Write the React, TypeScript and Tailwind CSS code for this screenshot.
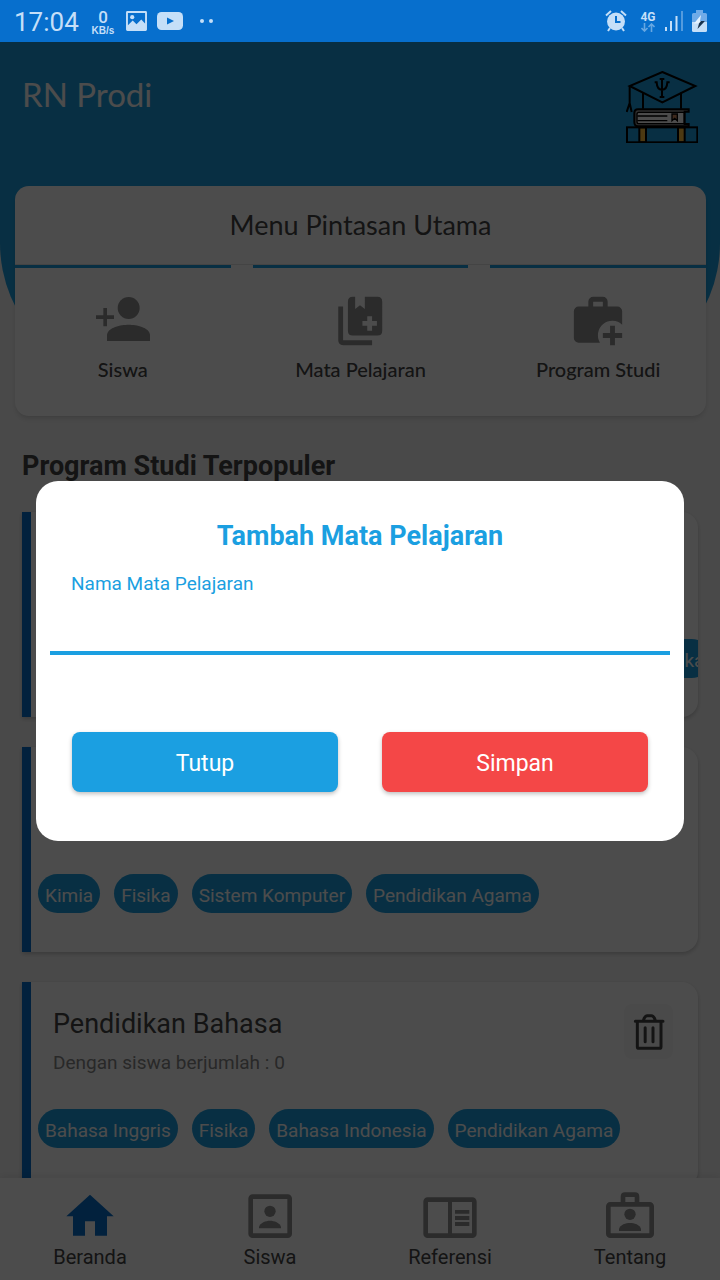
import React, { useState } from "react";

const roboto = "font-['Roboto',sans-serif]";
const lato = "font-['Lato',sans-serif]";

function StatusBar() {
  return (
    <div className="flex h-[42px] shrink-0 items-center justify-between bg-[#076fcd] pl-[14px] pr-[13px] text-[#c5dff8]">
      <div className="flex items-center">
        <span className="w-[76px] pt-[2px] text-[26px] leading-[40px]">17:04</span>
        <span className="flex w-[26px] flex-col items-center pt-[2px]">
          <span className="text-[17px] font-medium leading-[17px]">0</span>
          <span className="font-['Liberation_Sans',sans-serif] text-[10px] font-bold leading-[10px]">KB/s</span>
        </span>
        <svg className="ml-[10px] h-[20px] w-[21px]" viewBox="0 0 22 21" fill="currentColor">
          <path fillRule="evenodd" d="M1.500 0H20.500Q22 0 22 1.500V19.500Q22 21 20.500 21H1.500Q0 21 0 19.500V1.500Q0 0 1.500 0ZM2 2V15L7 10L11 14L16 9L20 13V2Z" />
          <circle cx="6.500" cy="6.500" r="2.200" />
        </svg>
        <svg className="ml-[10px] h-[18px] w-[26px]" viewBox="0 0 26 18">
          <rect width="26" height="18" rx="4.500" fill="currentColor" />
          <path d="M10 5.500V12.500L17 9Z" fill="#076fcd" />
        </svg>
        <svg className="ml-[17px] h-[4px] w-[14px]" viewBox="0 0 14 4" fill="currentColor">
          <circle cx="2" cy="2" r="2" />
          <circle cx="11" cy="2" r="2" />
        </svg>
      </div>
      <div className="flex items-center">
        <svg className="h-[22px] w-[22px]" viewBox="0 0 22 22" fill="none" stroke="currentColor" strokeWidth="2">
          <circle cx="11" cy="11.500" r="9" fill="currentColor" stroke="none" />
          <path d="M1 5.500L6 1M21 5.500L16 1M5 18L3 21M17 18L19 21" />
          <path d="M11 6V12H15.500" stroke="#076fcd" />
        </svg>
        <span className="ml-[12px] flex w-[18px] flex-col items-center">
          <span className="text-[12px] font-bold leading-[12px]">4G</span>
          <svg className="h-[9px] w-[14px] opacity-50" viewBox="0 0 14 9" fill="none" stroke="currentColor" strokeWidth="1.600">
            <path d="M3.500 0V8M.5 5L3.500 8L6.500 5M10.500 9V1M7.500 4L10.500 1L13.500 4" />
          </svg>
        </span>
        <svg className="ml-[8px] h-[20px] w-[18px]" viewBox="0 0 18 20" fill="currentColor">
          <rect x="0" y="16" width="2" height="4" />
          <rect x="5" y="10" width="2" height="10" />
          <rect x="10.500" y="5" width="2" height="15" />
          <rect x="16" y="0" width="2" height="20" opacity=".4" />
        </svg>
        <svg className="ml-[9px] h-[22px] w-[15px]" viewBox="0 0 15 22">
          <path d="M4 0H11V3H13.500Q15 3 15 4.500V12H0V4.500Q0 3 1.500 3H4Z" fill="#6fabe8" />
          <path d="M0 12H15V20.500Q15 22 13.500 22H1.500Q0 22 0 20.500Z" fill="currentColor" />
          <path d="M9 5L2 13.500H7L5.500 19L13 11H8Z" fill="#e4f2ff" />
          <path d="M7 13.500L5.500 19L13 11H9Z" fill="#16324f" />
        </svg>
      </div>
    </div>
  );
}

function Logo() {
  return (
    <svg className="h-[72px] w-[72px]" viewBox="138 212 216 216" fill="none" stroke="#000" strokeWidth="6">
      <rect x="178" y="381" width="20" height="45" fill="#ffc03c" />
      <rect x="294" y="381" width="20" height="45" fill="#ffc03c" />
      <rect x="141" y="381" width="211" height="45" />
      <path d="M326 327H174Q163 327 163 339V365Q163 378 174 378H326V371H314V334H326Z" fill="#999" />
      <path d="M176 336H312V370H176Q171 370 171 364V342Q171 336 176 336Z" fill="#fff" strokeWidth="4" />
      <path d="M172 347H262M172 361H262" strokeWidth="4" />
      <path d="M276 341H292V361L284 354L276 361Z" fill="#d08a60" strokeWidth="4" />
      <path d="M189 277V325M303 277V325M149 258V310M149 308L140 335M149 308L155 335" />
      <path d="M247 215L346 257L247 306L149 257Z" />
      <path d="M246 236V290M239 236H253M239 290H253M224 246H230Q231 268 246 268Q261 268 262 246H269" />
    </svg>
  );
}

function PersonAddIcon() {
  return (
    <svg className="h-[58px] w-[58px]" viewBox="282 366 174 174" fill="currentColor">
      <path d="M310 414H321V436H342V447H321V469H310V447H288V436H310Z" />
      <circle cx="386" cy="414" r="33" />
      <path d="M321 513V494C324 472 362 464 386 464C410 464 447 472 450 494V513Z" />
    </svg>
  );
}

function BookAddIcon() {
  return (
    <svg className="h-[58px] w-[58px]" viewBox="-1 0 24 24" fill="currentColor">
      <path d="M2 6H4V20H16V22H4Q2 22 2 20Z" />
      <path
        fillRule="evenodd"
        d="M8 2H9V7L11 5.500L13 7V2H18.200Q20.200 2 20.200 4V16Q20.200 18 18.200 18H8Q6 18 6 16V4Q6 2 8 2ZM14 10V12H12V14H14V16H16V14H18V12H16V10Z"
      />
    </svg>
  );
}

function BriefcaseAddIcon() {
  return (
    <svg className="h-[58px] w-[58px]" viewBox="0 0 24 24" fill="currentColor">
      <path
        fillRule="evenodd"
        d="M10 2H14A2 2 0 0 1 16 4V6H20A2 2 0 0 1 22 8V13.500A6 6 0 0 0 12.800 21H4A2 2 0 0 1 2 19V8A2 2 0 0 1 4 6H8V4A2 2 0 0 1 10 2ZM10 4V6H14V4Z"
      />
      <path d="M17 14H19V17H22V19H19V22H17V19H14V17H17Z" />
    </svg>
  );
}

const shortcuts = [
  { label: "Siswa", Icon: PersonAddIcon },
  { label: "Mata Pelajaran", Icon: BookAddIcon },
  { label: "Program Studi", Icon: BriefcaseAddIcon },
];

function ShortcutCard() {
  return (
    <section className="relative mx-[15px] -mt-[197px] mr-[14px] overflow-hidden rounded-[14px] bg-white shadow-md">
      <h2 className={`border-b border-[#e4e4e4] text-center text-[27px] leading-[78px] text-[#444] ${lato}`}>
        Menu Pintasan Utama
      </h2>
      <div className="grid grid-cols-3 gap-[22px]">
        {shortcuts.map(({ label, Icon }) => (
          <button key={label} className="flex flex-col items-center border-t-[3px] border-[#1b9fe1] pb-[34px] pt-[24px]">
            <span className="text-[#8f8f8f]">
              <Icon />
            </span>
            <span className={`mt-[6px] whitespace-nowrap text-[20px] font-medium leading-[26px] text-[#444] ${lato}`}>{label}</span>
          </button>
        ))}
      </div>
    </section>
  );
}

type Program = { name: string; students?: number; subjects: string[] };

const programs: Program[] = [
  {
    name: "Pendidikan IPA",
    subjects: ["Pendidikan Agama", "Bahasa Indonesia", "Bahasa Inggris", "Sejarah", "Fisika"],
  },
  {
    name: "Teknik Komputer",
    subjects: ["Kimia", "Fisika", "Sistem Komputer", "Pendidikan Agama"],
  },
  {
    name: "Pendidikan Bahasa",
    students: 0,
    subjects: ["Bahasa Inggris", "Fisika", "Bahasa Indonesia", "Pendidikan Agama"],
  },
];

function TrashIcon() {
  return (
    <svg className="h-[36px] w-[32px]" viewBox="817 132 96 108" fill="none" stroke="currentColor" strokeWidth="9" strokeLinecap="round" strokeLinejoin="round">
      <path d="M824 154H907M848 152Q852 137 860 137H872Q880 137 884 152M830 156V230Q830 235 835 235H896Q901 235 901 230V156" />
      <path d="M853.500 173V215M877 173V215" />
    </svg>
  );
}

function ProgramCard({ name, students, subjects }: Program) {
  return (
    <article className="h-[205px] shrink-0 overflow-hidden rounded-r-[16px] border-l-[9px] border-[#076fcd] bg-white shadow-[0_2px_4px_rgba(0,0,0,0.2)]">
      <div className="flex h-[127px] items-start justify-between pl-[22px] pr-[25px] pt-[22px]">
        <div>
          <h3 className="text-[27px] leading-[40px] text-[#444]">{name}</h3>
          {students !== undefined && (
            <p className="mt-[6px] text-[19px] leading-[26px] text-[#888]">Dengan siswa berjumlah : {students}</p>
          )}
        </div>
        <button aria-label={`Hapus ${name}`} className="flex h-[55px] w-[49px] items-center justify-center rounded-[8px] bg-[#f8f8f8] text-[#444]">
          <TrashIcon />
        </button>
      </div>
      <ul className="flex gap-[14px] pl-[7px]">
        {subjects.map((s) => (
          <li key={s} className="shrink-0 rounded-full bg-[#1b9fe1] px-[7px] pb-[4px] pt-[9px] text-[19px] leading-[26px] text-white">
            {s}
          </li>
        ))}
      </ul>
    </article>
  );
}

function HomeIcon() {
  return (
    <svg className="h-[50px] w-[60px]" viewBox="180 660 180 150" fill="currentColor">
      <path d="M270 674L341 739H321V797H285V754H255V797H219V739H199Z" />
    </svg>
  );
}

function StudentIcon() {
  return (
    <svg className="h-[50px] w-[60px]" viewBox="720 660 180 150" fill="currentColor">
      <rect x="752" y="680" width="117" height="117" rx="6" fill="none" stroke="currentColor" strokeWidth="14" />
      <circle cx="810" cy="724" r="17" />
      <path d="M777 775V771C780 758 798 752 810 752C822 752 840 758 843 771V775Z" />
    </svg>
  );
}

function ReferenceIcon() {
  return (
    <svg className="h-[50px] w-[60px]" viewBox="180 660 180 150" fill="currentColor">
      <rect x="197" y="689" width="146" height="108" rx="6" fill="none" stroke="currentColor" strokeWidth="14" />
      <path d="M264 689H276V797H264ZM285 720H328V731H285ZM285 738H328V750H285ZM285 756H328V768H285Z" />
    </svg>
  );
}

function AboutIcon() {
  return (
    <svg className="h-[50px] w-[60px]" viewBox="720 660 180 150" fill="currentColor">
      <path d="M789 700V680Q789 674 795 674H825Q831 674 831 680V700" fill="none" stroke="currentColor" strokeWidth="14" />
      <rect x="745" y="703" width="130" height="94" rx="6" fill="none" stroke="currentColor" strokeWidth="14" />
      <circle cx="810" cy="733" r="17" />
      <path d="M777 783V777C780 764 798 759 810 759C822 759 840 764 843 777V783Z" />
    </svg>
  );
}

const tabs = [
  { label: "Beranda", Icon: HomeIcon, tint: "text-[#076fcd]" },
  { label: "Siswa", Icon: StudentIcon, tint: "text-[#8f8f8f]" },
  { label: "Referensi", Icon: ReferenceIcon, tint: "text-[#8f8f8f]" },
  { label: "Tentang", Icon: AboutIcon, tint: "text-[#8f8f8f]" },
];

function TabBar() {
  return (
    <nav className="relative grid shrink-0 grid-cols-4 bg-white pb-[11px] pt-[12px] shadow-[0_-2px_8px_rgba(0,0,0,0.08)]">
      {tabs.map(({ label, Icon, tint }) => (
        <a key={label} href={`#${label.toLowerCase()}`} className="flex flex-col items-center">
          <span className={tint}>
            <Icon />
          </span>
          <span className="mt-[5px] text-[20px] leading-[24px] text-[#444]">{label}</span>
        </a>
      ))}
    </nav>
  );
}

function AddSubjectDialog({ onClose }: { onClose: () => void }) {
  return (
    <div className="absolute inset-0 flex items-center justify-center bg-black/70">
      <form
        role="dialog"
        aria-labelledby="dialog-title"
        onSubmit={(e) => e.preventDefault()}
        className="flex w-[90%] flex-col rounded-[22px] bg-white px-[14px] pb-[49px] pt-[39px]"
      >
        <h2 id="dialog-title" className="text-center text-[27px] font-bold leading-[32px] text-[#1b9fe1]">
          Tambah Mata Pelajaran
        </h2>
        <label htmlFor="subject" className="ml-[21px] mt-[20px] text-[19px] leading-[24px] text-[#1b9fe1]">
          Nama Mata Pelajaran
        </label>
        <input id="subject" type="text" className="h-[59px] w-full border-b-[4px] border-[#1b9fe1] bg-transparent px-[21px] text-[20px] outline-none" />
        <div className="mt-[77px] grid grid-cols-2 gap-[44px] px-[22px] text-[23px] leading-[56px] text-white">
          <button type="button" onClick={onClose} className="rounded-[8px] bg-[#1b9fe1] pt-[4px] shadow-[0_2px_4px_rgba(0,0,0,0.25)]">
            Tutup
          </button>
          <button type="submit" className="rounded-[8px] bg-[#f44747] pt-[4px] shadow-[0_2px_4px_rgba(0,0,0,0.25)]">
            Simpan
          </button>
        </div>
      </form>
    </div>
  );
}

export default function App() {
  const [open, setOpen] = useState(true);
  return (
    <div className={`flex h-screen flex-col overflow-hidden ${roboto}`}>
      <StatusBar />
      <div className="relative flex min-h-0 flex-1 flex-col bg-[#f5f5f5]">
        <main className="min-h-0 flex-1 overflow-hidden">
          <header className="flex h-[341px] items-start justify-between rounded-b-[140px] bg-[#1b9fe1] pl-[22px] pr-[22px] pt-[29px]">
            <h1 className={`text-[33px] leading-[46px] text-white ${lato}`}>RN Prodi</h1>
            <Logo />
          </header>
          <ShortcutCard />
          <h2 className="ml-[22px] mt-[34px] text-[27px] font-bold leading-[32px] text-[#444]">Program Studi Terpopuler</h2>
          <div className="mx-[22px] mt-[30px] flex flex-col gap-[30px]">
            {programs.map((p) => (
              <ProgramCard key={p.name} {...p} />
            ))}
          </div>
        </main>
        <TabBar />
        {open && <AddSubjectDialog onClose={() => setOpen(false)} />}
      </div>
    </div>
  );
}
